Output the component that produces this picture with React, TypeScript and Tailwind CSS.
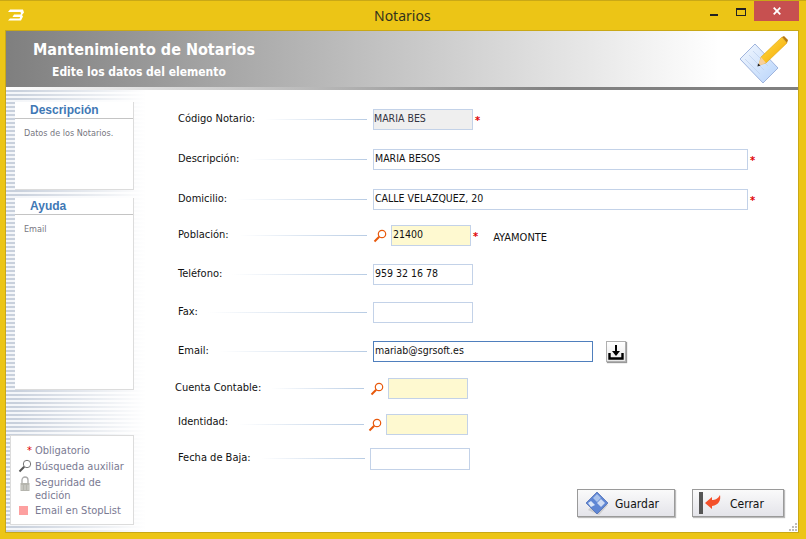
import React from "react";

const Mag = ({ className = "" }: { className?: string }) => (
  <svg viewBox="0 0 14 14" className={"w-[14px] h-[14px] mt-[1px] " + className}>
    <circle cx="9" cy="5" r="3.7" fill="#fff" stroke="#e8590c" strokeWidth="1.2" />
    <path d="M6.2 7.8 1.5 12.5" stroke="#e8590c" strokeWidth="2" />
  </svg>
);

const Req = () => <span className="text-[#e00000] text-[11px] leading-none ml-[2px] mt-[1px] font-bold">*</span>;

function Row({ label, mt, left, labelClass = "mt-[-1px]", children }: { label: string; mt: string; left: string; labelClass?: string; children: React.ReactNode }) {
  return (
    <div className={"flex items-center h-[21px] " + mt}>
      <div className={"flex items-center shrink-0 " + left}>
        <span className={"whitespace-nowrap " + labelClass}>{label}</span>
        <span className="flex-1 h-px mb-[1px] ml-[10px] bg-[linear-gradient(to_right,#ffffff,#b8cce4)]" />
      </div>
      {children}
    </div>
  );
}

const field = "h-[21px] border px-px pt-[1px] leading-[15px] text-[10.5px] whitespace-nowrap";

function Legend() {
  return (
    <div className="mt-[45px] w-[124px] h-[90px] border border-[#dcdcdc] bg-white pl-[7px] pt-[6px] text-[#7a7a92] text-[11px] leading-[13px]">
      <div className="flex items-center h-[16px]">
        <span className="w-[17px] text-right text-[#e00000] text-[11px] pr-[3px]">*</span>
        <span>Obligatorio</span>
      </div>
      <div className="flex items-center h-[16px]">
        <svg viewBox="0 0 14 14" className="w-[14px] h-[14px] mr-[3px]">
          <circle cx="9" cy="5" r="3.7" fill="#fff" stroke="#777" strokeWidth="1" />
          <path d="M6.2 7.8 1.5 12.5" stroke="#555" strokeWidth="2" />
        </svg>
        <span>Búsqueda auxiliar</span>
      </div>
      <div className="flex items-start mt-[1px]">
        <svg viewBox="0 0 14 16" className="w-[14px] h-[16px] mr-[3px] mt-[1px] shrink-0">
          <path d="M4 7V4a3 3 0 0 1 6 0v3" fill="none" stroke="#aaa" strokeWidth="1.3" />
          <rect x="2.5" y="7" width="9" height="8" fill="#b5b5ae" />
          <path d="M4 9v5M7 9v5M10 9v5" stroke="#d5d5d0" />
        </svg>
        <span className="leading-[13px] w-[80px] pt-[1px]">Seguridad de edición</span>
      </div>
      <div className="flex items-center h-[16px]">
        <span className="w-[9px] h-[9px] bg-[#fda0a0] ml-[1px] mr-[7px]" />
        <span>Email en StopList</span>
      </div>
    </div>
  );
}

export default function App() {
  return (
    <div className="w-[806px] h-[539px] overflow-hidden flex flex-col bg-[#ecc516] border-t border-[#c9a816] font-['DejaVu_Sans_Condensed','DejaVu_Sans',sans-serif] [font-stretch:condensed] text-[11px] text-[#111]">
      <div className="h-[29px] shrink-0 flex items-start">
        <svg viewBox="0 0 16 11" className="ml-[8px] mt-[8px] w-[16px] h-[12px] shrink-0">
          <path d="M2 0h13l1 3-2 2.5L15 7l-2 4H0l2-2h9.5l.7-1.5H4.5L6 5h6.5l.5-1.2-.6-1.2H0Z" fill="#fff" />
        </svg>
        <div className="flex-1 pl-[350px] text-[14px] leading-[30px] text-[#33331c] [font-stretch:normal] font-['Noto_Sans',sans-serif]">Notarios</div>
        <svg viewBox="0 0 10 10" className="mt-[9px] w-[10px] h-[10px] shrink-0"><rect x="0" y="4" width="8" height="2" fill="#222" /></svg>
        <svg viewBox="0 0 10 8" className="ml-[16px] mt-[7px] w-[10px] h-[8px] shrink-0"><rect x=".5" y=".5" width="9" height="7" fill="none" stroke="#222" /><rect x="0" y="0" width="10" height="2" fill="#222" /></svg>
        <div className="ml-[8px] mr-[7px] w-[45px] h-[20px] bg-[#c75050] flex items-center justify-center shrink-0">
          <svg viewBox="0 0 8 8" className="w-[8px] h-[8px]"><path d="M.7.7l6.6 6.6M7.3.7.7 7.3" stroke="#fff" strokeWidth="1.8" /></svg>
        </div>
      </div>

      <div className="ml-[5px] w-[794px] h-[503px] border border-[#c9a816] bg-white flex flex-col relative">
        <div className="h-[56px] shrink-0 flex justify-between bg-[linear-gradient(to_right,#7f7f7f,#ffffff_90%)] text-white font-bold">
          <div>
            <div className="pl-[27px] pt-[8px] text-[16px] leading-[22px]">Mantenimiento de Notarios</div>
            <div className="pl-[46px] text-[12px] leading-[20px] pt-[1px]">Edite los datos del elemento</div>
          </div>
          <svg viewBox="0 0 50 50" className="mr-[9px] mt-[5px] w-[50px] h-[50px] shrink-0">
            <defs>
              <linearGradient id="pg" x1="0" y1="0" x2="1" y2="1">
                <stop offset="0" stopColor="#ffe14a" />
                <stop offset="1" stopColor="#f5a400" />
              </linearGradient>
              <linearGradient id="pp" x1="0" y1="0" x2="1" y2="1">
                <stop offset="0" stopColor="#f4f8fe" />
                <stop offset="1" stopColor="#b7d4fb" />
              </linearGradient>
            </defs>
            <path d="M1 23 16 8 39 32 24 47Z" fill="url(#pp)" stroke="#9fb4dd" strokeWidth="1" />
            <path d="M6 23 21 38M10 19 25 34M14 15 29 30" stroke="#c0d2ee" strokeWidth="0.8" />
            <path d="M22 21 43 1 48 7 27 27 20 29Z" fill="url(#pg)" stroke="#d99a00" strokeWidth="0.5" />
            <path d="M43 1 45 0 49 4 48 7Z" fill="#b87a10" />
            <path d="M22 21 27 27 19 30Z" fill="#f7cf9c" />
            <path d="M19 27.5 21.5 29.5 18.5 30.5Z" fill="#222" />
          </svg>
        </div>
        <div className="h-[3px] shrink-0 bg-[linear-gradient(to_right,#ffffff,#808080_70%)]" />

        <div className="flex-1 flex min-h-0">
          <div className="w-[140px] shrink-0 pl-[4px] pt-[12px] bg-[linear-gradient(to_right,rgba(255,255,255,0)_10px,#ffffff_140px),repeating-linear-gradient(to_bottom,#c8d0dc_0px,#c8d0dc_2px,#f4f6f9_2px,#f4f6f9_4px)]">
            <div className="ml-[5px] w-[119px] h-[88px] border-r border-b border-[#dcdcdc] bg-white">
              <div className="h-[17px] border-b border-[#c4c4c4] pl-[15px] text-[#3f78b5] font-bold text-[12px] leading-[16px] [font-stretch:normal] font-['Liberation_Sans',sans-serif]">Descripción</div>
              <div className="pl-[9px] pt-[8px] text-[#77777f] text-[9px] leading-[12px]">Datos de los Notarios.</div>
            </div>
            <div className="ml-[5px] mt-[8px] w-[119px] h-[192px] border-r border-b border-[#dcdcdc] bg-white">
              <div className="h-[17px] border-b border-[#c4c4c4] pl-[15px] text-[#3f78b5] font-bold text-[12px] leading-[16px] [font-stretch:normal] font-['Liberation_Sans',sans-serif]">Ayuda</div>
              <div className="pl-[9px] pt-[8px] text-[#77777f] text-[9px] leading-[12px]">Email</div>
            </div>
            <Legend />
          </div>

          <div className="flex-1 pl-[32px] pt-[19px]">
            <Row label="Código Notario:" mt="" left="w-[189px]">
              <div className={field + " ml-[6px] w-[100px] bg-[#efefef] text-[#33333f] pl-0 border-[#c3d2e8]"}>MARIA BES</div>
              <Req />
            </Row>
            <Row label="Descripción:" mt="mt-[19px]" left="w-[189px]">
              <div className={field + " ml-[6px] w-[375px] border-[#c3d2e8]"}>MARIA BESOS</div>
              <Req />
            </Row>
            <Row label="Domicilio:" mt="mt-[19px]" left="w-[189px]">
              <div className={field + " ml-[6px] w-[375px] border-[#c3d2e8]"}>CALLE VELAZQUEZ, 20</div>
              <Req />
            </Row>
            <Row label="Población:" mt="mt-[15px]" left="w-[189px]">
              <Mag className="ml-[6px] mr-[4px]" />
              <div className={field + " w-[80px] bg-[#fef9d0] border-[#c3d2e8]"}>21400</div>
              <Req />
              <span className="ml-[15px] mt-[5px]">AYAMONTE</span>
            </Row>
            <Row label="Teléfono:" mt="mt-[18px]" left="w-[189px]">
              <div className={field + " ml-[6px] w-[100px] border-[#c3d2e8]"}>959 32 16 78</div>
            </Row>
            <Row label="Fax:" mt="mt-[17px]" left="w-[189px]">
              <div className={field + " ml-[6px] w-[100px] border-[#c3d2e8]"} />
            </Row>
            <Row label="Email:" mt="mt-[18px]" left="w-[189px]">
              <div className={field + " ml-[6px] w-[220px] border-[#4f7fbd]"}>mariab@sgrsoft.es</div>
              <div className="ml-[13px] w-[20px] h-[21px] border border-[#b0b0b0] bg-[linear-gradient(to_bottom,#ffffff,#e8e8e8)] shadow-[1px_1px_1px_#999] flex items-end justify-center pb-[1px]">
                <svg viewBox="0 0 16 16" className="w-[16px] h-[16px]">
                  <path d="M8 1v8" stroke="#000" strokeWidth="2" />
                  <path d="M4 7h8l-4 5Z" fill="#000" />
                  <path d="M1.5 9v5.5h13V9" fill="none" stroke="#000" strokeWidth="2.4" />
                </svg>
              </div>
            </Row>
            <Row label="Cuenta Contable:" mt="mt-[16px]" left="ml-[-3px] w-[189px]">
              <Mag className="ml-[6px] mr-[4px]" />
              <div className={field + " w-[80px] bg-[#fef9d0] border-[#c3d2e8]"} />
            </Row>
            <Row label="Identidad:" mt="mt-[15px]" left="w-[186px]" labelClass="mt-[-5px]">
              <Mag className="ml-[4px] mr-[4px]" />
              <div className={field + " w-[82px] bg-[#fef9d0] border-[#c3d2e8]"} />
            </Row>
            <Row label="Fecha de Baja:" mt="mt-[13px]" left="w-[187px]">
              <div className="border border-[#c3d2e8] ml-[5px] w-[100px] h-[22px]" />
            </Row>

            <div className="ml-[399px] mt-[20px] flex gap-[17px]">
              <div className="w-[98px] h-[28px] border border-[#9a9a9a] bg-[linear-gradient(to_bottom,#fafafa,#e4e4ea)] shadow-[1px_1px_1px_#bbb] flex items-center pl-[7px]">
                <svg viewBox="0 0 24 24" className="w-[24px] h-[24px] mr-[6px]">
                  <path d="M3 19 14 24 23 14 12 9Z" fill="#bbb" opacity="0.6" />
                  <path d="M12 1 23 12 12 23 1 12Z" fill="#5f86d4" stroke="#3a5aa8" strokeWidth="0.6" />
                  <path d="M12 3 16 7 12 11 8 7Z" fill="#a9c2ec" />
                  <path d="M12 12 16 8 20 12 16 16Z" fill="#cfdcf4" />
                  <path d="M6 10 10 14 6 16 3 12Z" fill="#dbe6f8" />
                </svg>
                <span className="text-[12px] pt-[2px]">Guardar</span>
              </div>
              <div className="w-[92px] h-[28px] border border-[#9a9a9a] bg-[linear-gradient(to_bottom,#fafafa,#e4e4ea)] shadow-[1px_1px_1px_#bbb] flex items-center pl-[6px]">
                <span className="w-[4px] h-[22px] bg-[#555] mr-[1px]" />
                <svg viewBox="0 0 20 20" className="w-[20px] h-[20px] mr-[6px]">
                  <path d="M1 10 8 4v3c3 0 6-1 8-5 1 5-1 10-8 11v3Z" fill="#f4502a" />
                </svg>
                <span className="text-[12px] pt-[2px]">Cerrar</span>
              </div>
            </div>
          </div>
        </div>

        <svg viewBox="0 0 9 9" className="absolute right-0 bottom-0 w-[9px] h-[9px]">
          <path d="M6 0h2v2H6ZM3 3h2v2H3ZM6 3h2v2H6ZM0 6h2v2H0ZM3 6h2v2H3ZM6 6h2v2H6Z" fill="#bdbdbd" />
        </svg>
      </div>
    </div>
  );
}
